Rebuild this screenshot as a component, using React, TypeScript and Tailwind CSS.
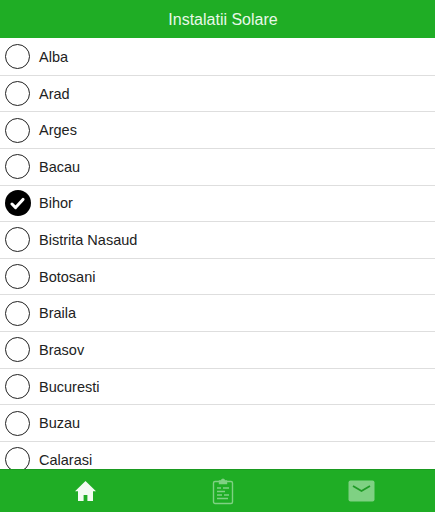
const counties = ["Alba", "Arad", "Arges", "Bacau", "Bihor", "Bistrita Nasaud", "Botosani", "Braila", "Brasov", "Bucuresti", "Buzau", "Calarasi"]

function Radio({ checked }: { checked: boolean }) {
  if (!checked) return <span className="block h-[25px] w-[25px] shrink-0 rounded-full border border-[#222]" />
  return (
    <span className="-mx-[0.5px] flex h-[26px] w-[26px] shrink-0 items-center justify-center rounded-full bg-black">
      <svg width="15" height="13" viewBox="0 0 15 13" fill="none">
        <path d="M2 7l3.6 3.6L13 2.4" stroke="#fff" strokeWidth="3" strokeLinecap="round" strokeLinejoin="round" />
      </svg>
    </span>
  )
}

export default function App() {
  return (
    <div className="flex h-[512px] w-[435px] flex-col overflow-hidden bg-white font-['Liberation_Sans',sans-serif]">
      <header className="flex h-[38px] shrink-0 items-center justify-center bg-[#1fad25] pl-[11px] pt-[1px] text-[16px] text-[#e8f8e8]">
        Instalatii Solare
      </header>

      <ul className="min-h-0 flex-1 overflow-hidden pt-[1px]">
        {counties.map((name) => (
          <li key={name} className="flex h-[36.64px] items-center gap-[9px] border-b border-[#dedede] pl-[5px] text-[14.5px] text-[#222]">
            <Radio checked={name === "Bihor"} />
            <span className="pt-[2px]">{name}</span>
          </li>
        ))}
      </ul>

      <nav className="grid h-[43px] shrink-0 grid-cols-3 items-center border-t border-[#1a9a20] bg-[#1fad25] pl-[17px] pr-[5px]">
        <div className="flex justify-center">
          <svg width="23" height="22" viewBox="0 0 23 22" fill="#f2fbf2">
            <path d="M11.5 1 1 11.2h3V21h5.6v-6h3.8v6H19v-9.800h3z" />
          </svg>
        </div>
        <div className="flex justify-center">
          <svg width="22" height="27" viewBox="0 0 22 27" fill="none" stroke="#7fd183" strokeWidth="1.4">
            <rect x="1.500" y="3.500" width="19" height="22" rx="1.500" />
            <path d="M7.500 5.500V3h2c0-2.400 3-2.400 3 0h2v2.500z" fill="#7fd183" />
            <path d="M5 10h4M11 10h6M5 13.500h8M5 17h5M12 17h5M5 20.500h11" />
          </svg>
        </div>
        <div className="flex justify-center">
          <svg width="27" height="22" viewBox="0 0 27 22">
            <rect x="0.500" y="0.500" width="26" height="21" rx="2" fill="#7fd183" />
            <path d="M5 6l8.500 5L22 6" fill="none" stroke="#1f9a25" strokeWidth="1.800" />
          </svg>
        </div>
      </nav>
    </div>
  )
}
